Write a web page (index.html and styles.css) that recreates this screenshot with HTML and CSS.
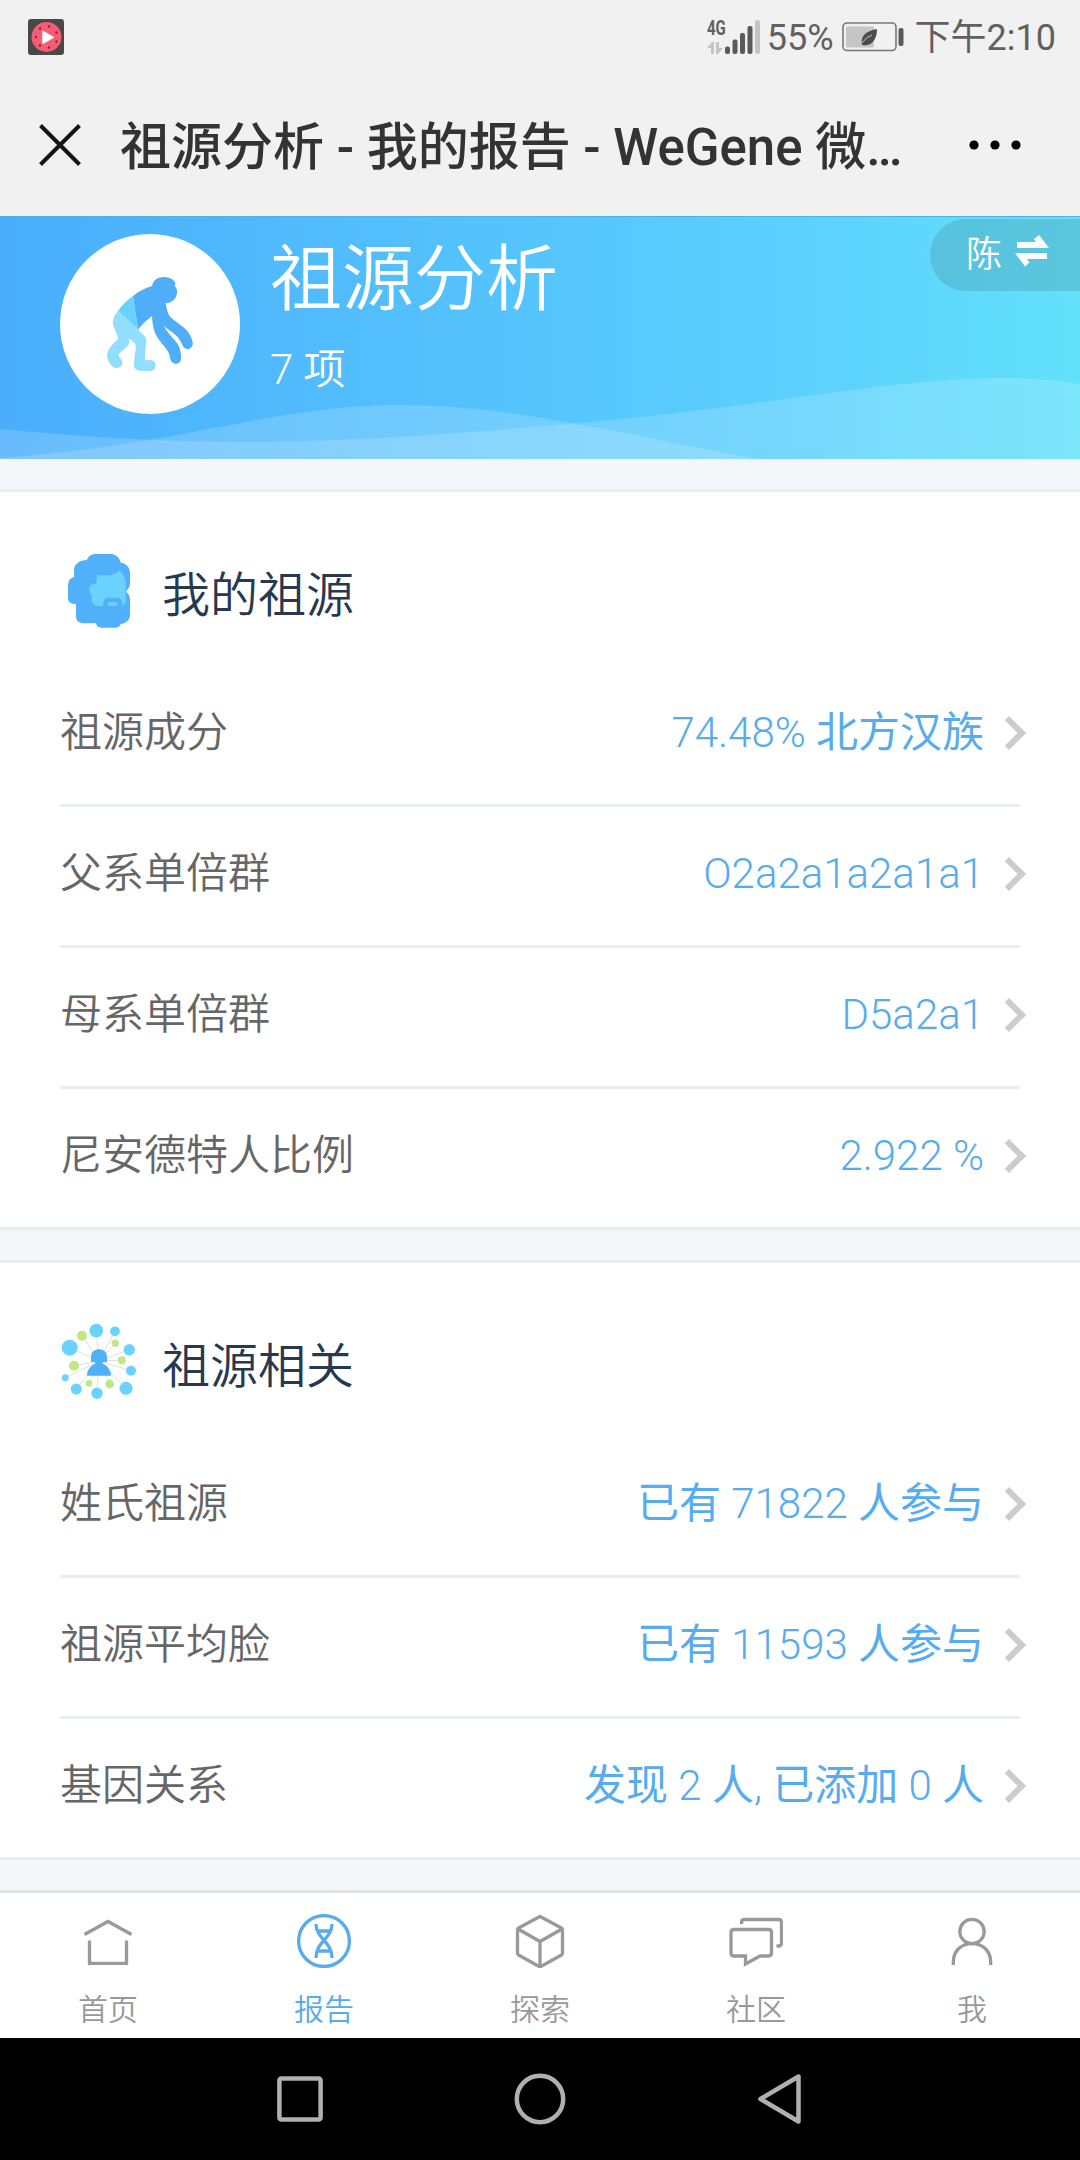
FILE: index.html
```html
<!DOCTYPE html>
<html lang="zh-CN">
<head>
    <meta charset="UTF-8">
    <meta name="viewport" content="width=device-width, initial-scale=1.0">
    <title>祖源分析 - 我的报告 - WeGene</title>
    <link rel="stylesheet" href="styles.css">
</head>
<body>
    <div class="statusbar">
        <svg class="app-icon" width="36" height="36" viewBox="0 0 36 36">
            <rect width="36" height="36" rx="3" fill="#484848"/>
            <circle cx="18.5" cy="18" r="15" fill="#f75c74"/>
            <g fill="#7c2f3b">
                <circle cx="21" cy="7.5" r="1.2"/><circle cx="12" cy="9.5" r="1.2"/>
                <circle cx="28.5" cy="13.5" r="1.2"/><circle cx="8" cy="18" r="1.2"/>
                <circle cx="28.5" cy="22.5" r="1.2"/><circle cx="12" cy="26.5" r="1.2"/>
                <circle cx="21" cy="28.5" r="1.2"/>
            </g>
            <path d="M15 12.5L25 18.3L15 24Z" fill="#fff" stroke="#fff" stroke-width="1.5" stroke-linejoin="round"/>
        </svg>
        <div class="status-right">
            <div class="network">
                <div class="network-type">
                    <span>4G</span>
                    <svg width="17" height="12" viewBox="0 0 17 12" fill="#c4c4c4">
                        <path d="M0 6L5 0H7V12H4V6Z"/>
                        <path d="M9 0H12V6H16L11 12H9Z"/>
                    </svg>
                </div>
                <svg width="36" height="34" viewBox="0 0 36 34" fill="#5a5a5a">
                    <rect x="0" y="26.500" width="5" height="7.500" rx="2"/>
                    <rect x="7.500" y="19.500" width="5" height="14.500" rx="2"/>
                    <rect x="15" y="13" width="5" height="21" rx="2"/>
                    <rect x="22.500" y="6" width="5" height="28" rx="2"/>
                    <rect x="30" y="0" width="5" height="34" rx="2" fill="#c4c4c4"/>
                </svg>
            </div>
            <span class="percent">55%</span>
            <svg class="battery" width="63" height="30" viewBox="0 0 63 30">
                <rect x="1" y="1" width="53" height="27.500" rx="4" fill="none" stroke="#777" stroke-width="1.600"/>
                <rect x="4" y="4.500" width="28" height="21" rx="1" fill="#c6c6c6"/>
                <path d="M20 23C18 13 25 9 35 7C35 18 29 25 20 23Z" fill="#4c4c4c"/>
                <path d="M20 21Q24 15 30 13" fill="none" stroke="#c6c6c6" stroke-width="1"/>
                <rect x="56.500" y="6" width="5" height="18" rx="2" fill="#5a5a5a"/>
            </svg>
            <span class="time">下午2:10</span>
        </div>
    </div>

    <header class="titlebar">
        <svg width="42" height="42" viewBox="0 0 42 42" stroke="#161616" stroke-width="4">
            <path d="M1.500 1.500L40.500 40.500M40.500 1.500L1.500 40.500"/>
        </svg>
        <h1>祖源分析 - 我的报告 - WeGene 微<span class="ellipsis">…</span></h1>
        <svg class="more" width="52" height="10" viewBox="0 0 52 10">
            <circle cx="5" cy="5" r="4.600"/><circle cx="26" cy="5" r="4.600"/><circle cx="47" cy="5" r="4.600"/>
        </svg>
    </header>

    <section class="hero">
        <svg class="waves" viewBox="0 0 1080 243" fill="#fff" fill-opacity="0.17">
            <path d="M0 213C200 232 330 230 600 205C760 190 900 162 1000 162C1040 162 1060 165 1080 168V243H0Z"/>
            <path d="M0 242C190 228 270 189 400 189C520 189 650 225 760 243H0Z"/>
        </svg>
        <div class="avatar">
            <svg width="180" height="180" viewBox="0 0 180 180">
                <path fill="#50aef9" d="M73 62C79 57 85 54 92 52C93 46 98 43 104 43C110 43 115 46 115.500 50L114.500 52C116.500 53.500 117.300 56 117 59C116.500 65 111 69.500 105.600 69C106.500 74 107.500 79 109.500 82C115 88 122 91 127.400 97C131 102 132.500 106 132.800 109.300C132.800 116 125 117 122.500 111.500C121 108 119 104 116.700 102C112 98 109 96 103.700 92C107 98 113 104 117 109C120 113 121.500 120 121 125C120 132 111.500 131 110.300 125C109.500 122 109.500 120 108 117.500C104 111 98 106 95 99C93 94 92.300 88 92 82C87 86 83 89 78 96Z"/>
                <path fill="#68d1ff" d="M73 62L78 96L58.200 76.700Q64 68 73 62Z"/>
                <path fill="#91deff" d="M58.200 76.700C53 83 52 87 53.500 92C55 97 57 100 58.300 104.500C54 109 49 113 47.500 118.500C46 124 49 129 52 132C57 137 64 132 62.300 127.500C61 124.500 58 122 58.800 120.500C62 116 66 114 68.500 111C69.700 109 69.200 107 69.300 104.300C71.500 107 75.500 108.500 75.800 111.500C76 118 74 124 73.900 131C74 134 76.500 136.500 79.600 136.700L90 137C97.500 137 97.500 126 90 126C88 126 86 127 84.800 125.500C84.500 119 86.500 112 86.300 106C86 102 82 99.500 78 96Z"/>
            </svg>
        </div>
        <div class="hero-text">
            <h2>祖源分析</h2>
            <p>7 项</p>
        </div>
        <div class="switch-user">
            <span>陈</span>
            <svg width="34" height="32" viewBox="0 0 34 32" fill="#fff">
                <path d="M2 7H21L19 4L24 0L34 13H2Z"/>
                <path d="M32 24H12L14.500 27.500L10 31.500L0 18H32Z"/>
            </svg>
        </div>
    </section>

    <main class="content">
        <section class="card">
            <div class="card-header">
                <svg width="78" height="78" viewBox="0 0 78 78">
                    <path fill="#50b0fa" d="M26.700 8C28.500 4 31 2 35 2H51C56 2 59.500 5.500 60.700 10.700C66 11 70 15.500 70 21V32C70 35.500 67.500 37.500 65.700 39.700C68.500 41.500 70 43.500 70 47V63C70 68 66 71.500 60.700 72C60 74.500 58 75.700 55 75.700H42C38 75.700 36.500 74 36 71.300H24C19 71.300 16 69 16 64V52C11 52 8 50 8 46V34C8 29 10 26 14 25.300V18C14 12 20 8 26.700 8Z"/>
                    <path fill="#69d2ff" d="M36.700 23.300H47C53 23.300 57 21.500 59.300 18C64 22 66.500 30 66 36L65 39.500Q65.700 41 65.700 45V49.700Q65.500 53 62.700 54Q62.500 45.700 56 45.700H49Q43.300 45.700 43.300 51V54H37Q31.700 53 31.700 47V43Q29.300 41 29.300 37Q29.300 33 33 32.300Q36.700 31.500 36.700 29Z"/>
                    <path fill="#69d2ff" d="M47.700 54V52.500Q47.700 50 50.200 50H55Q57.500 50 57.500 52.500V54Z"/>
                </svg>
                <h3>我的祖源</h3>
            </div>
            <ul class="list">
                <li><span class="label">祖源成分</span><span class="value">74.48% <b>北方汉族</b></span><i class="arrow"></i></li>
                <li><span class="label">父系单倍群</span><span class="value">O2a2a1a2a1a1</span><i class="arrow"></i></li>
                <li><span class="label">母系单倍群</span><span class="value">D5a2a1</span><i class="arrow"></i></li>
                <li><span class="label">尼安德特人比例</span><span class="value">2.922 %</span><i class="arrow"></i></li>
            </ul>
        </section>

        <section class="card">
            <div class="card-header">
                <svg width="78" height="78" viewBox="0 0 78 78">
                    <path stroke="#dcdcdc" stroke-width="0.900" fill="none" d="M39 38L9.700 24.700M39 38L36.300 7.700M39 38L55 8.300M39 38L69.300 26.700M39 38L71 47.700M39 38L66 65.300M39 38L37 70.300M39 38L16.300 66M39 38L5.300 54.700M39 38L22 12.700M39 38L55.300 20.300M39 38L61.700 37.300M39 38L49.700 61M39 38L29 60.300M39 38L14 42.700"/>
                    <g fill="#69d2ff">
                        <circle cx="9.700" cy="24.700" r="8"/><circle cx="36.300" cy="7.700" r="6.900"/>
                        <circle cx="55" cy="8.300" r="4.900"/><circle cx="69.300" cy="26.700" r="5.700"/>
                        <circle cx="71" cy="47.700" r="5"/><circle cx="66" cy="65.300" r="6.500"/>
                        <circle cx="37" cy="70.300" r="5.700"/><circle cx="16.300" cy="66" r="5.500"/>
                        <circle cx="5.300" cy="54.700" r="3.400"/>
                    </g>
                    <g fill="#bfe884">
                        <circle cx="22" cy="12.700" r="5"/><circle cx="55.300" cy="20.300" r="3.700"/>
                        <circle cx="61.700" cy="37.300" r="4"/><circle cx="49.700" cy="61" r="4.400"/>
                        <circle cx="29" cy="60.300" r="3.400"/><circle cx="14" cy="42.700" r="5"/>
                    </g>
                    <path fill="#50b0fa" d="M31 39V34C31 23.500 47 23.500 47 34V39H43.500L42.500 40.800C47 42 51 47 51 52.700H27C27 47 31 42 35.500 40.800L34.500 39Z"/>
                </svg>
                <h3>祖源相关</h3>
            </div>
            <ul class="list">
                <li><span class="label">姓氏祖源</span><span class="value"><b>已有</b> 71822 <b>人参与</b></span><i class="arrow"></i></li>
                <li><span class="label">祖源平均脸</span><span class="value"><b>已有</b> 11593 <b>人参与</b></span><i class="arrow"></i></li>
                <li><span class="label">基因关系</span><span class="value"><b>发现</b> 2 <b>人</b>, <b>已添加</b> 0 <b>人</b></span><i class="arrow"></i></li>
            </ul>
        </section>
    </main>

    <nav class="tabbar">
        <a class="tab">
            <svg viewBox="0 0 54 54">
                <path d="M3.500 20.500L27 7.500L50.500 20.500M8.500 26.500V49.300H45.500V26.500"/>
            </svg>
            <span>首页</span>
        </a>
        <a class="tab active">
            <svg viewBox="0 0 54 54">
                <circle cx="27" cy="27" r="25.400"/>
                <path d="M19 10C19 25 35 27 35 44M35 10C35 25 19 27 19 44M20 17H34M20 37H34"/>
            </svg>
            <span>报告</span>
        </a>
        <a class="tab">
            <svg viewBox="0 0 54 54">
                <path stroke-linejoin="round" d="M27 2.500L48.500 14Q49.500 14.500 49.500 16V39Q49.500 40.500 48.500 41L27 53L5.500 41Q4.500 40.500 4.500 39V16Q4.500 14.500 5.500 14ZM5 15L27 27.500L49 15M27 27.500V53"/>
            </svg>
            <span>探索</span>
        </a>
        <a class="tab">
            <svg viewBox="0 0 54 54">
                <path d="M5 15.500H39.500Q42.500 15.500 42.500 18.500V39Q42.500 42 39.500 42H31L16.500 50V42H5Q2 42 2 39V18.500Q2 15.500 5 15.500Z"/>
                <path d="M12.500 10V8.500Q12.500 5.500 15.500 5.500H49.500Q52.500 5.500 52.500 8.500V29Q52.500 32 49.500 32H47.500"/>
            </svg>
            <span>社区</span>
        </a>
        <a class="tab">
            <svg viewBox="0 0 54 54">
                <circle cx="27" cy="17.500" r="12.200"/>
                <path d="M8.300 51V48.500C8.300 37 16 29.700 27 29.700C38 29.700 45.700 37 45.700 48.500V51"/>
            </svg>
            <span>我</span>
        </a>
    </nav>

    <div class="navbar">
        <svg viewBox="0 0 54 54"><rect x="6.400" y="6.400" width="41.200" height="41.200" rx="2"/></svg>
        <svg viewBox="0 0 54 54"><circle cx="27" cy="27" r="23.200"/></svg>
        <svg viewBox="0 0 54 54"><path stroke-linejoin="round" d="M45.500 4.500V49.500L7.500 27Z"/></svg>
    </div>
</body>
</html>
```
FILE: styles.css
```css
* {
    margin: 0;
    padding: 0;
    box-sizing: border-box;
}

body {
    width: 1080px;
    height: 2160px;
    display: flex;
    flex-direction: column;
    font-family: Roboto, "Noto Sans CJK SC", sans-serif;
    background: #f3f7fa;
    overflow: hidden;
}

svg {
    display: block;
    flex-shrink: 0;
}

/* system status bar */
.statusbar {
    height: 74px;
    padding: 0 24px 0 28px;
    display: flex;
    align-items: center;
    justify-content: space-between;
    background: #f1f1f1;
    color: #606060;
    font-size: 36px;
    line-height: 42px;
}

.status-right {
    display: flex;
    align-items: center;
}

.network {
    display: flex;
    align-items: flex-end;
    margin-right: 6px;
}

.network-type {
    width: 18px;
    height: 34px;
    display: flex;
    flex-direction: column;
    justify-content: space-between;
}

.network-type span {
    font-size: 20px;
    line-height: 16px;
    font-weight: 700;
    transform: scaleX(0.75);
    transform-origin: left;
}

.percent,
.time {
    padding-top: 2px;
}

.battery {
    margin: 0 10px 0 8px;
}

/* title bar */
.titlebar {
    height: 142px;
    padding: 0 59px 0 39px;
    display: flex;
    align-items: center;
    background: #f1f1f1;
}

.titlebar h1 {
    flex: 1;
    margin-left: 39px;
    padding-top: 5px;
    font-size: 51px;
    line-height: 72px;
    font-weight: 500;
    color: #333;
    white-space: nowrap;
}

.titlebar .ellipsis {
    font-family: Roboto, sans-serif;
}

/* hero */
.hero {
    position: relative;
    height: 243px;
    padding: 17px 60px 0;
    display: flex;
    border-top: 1px solid #4fb2e0;
    background: linear-gradient(90deg, #4aaefc 0%, #5bd0fd 74%, #62e1fa 100%);
    color: #fff;
}

.waves {
    position: absolute;
    left: 0;
    bottom: 0;
    width: 1080px;
    height: 243px;
}

.avatar {
    position: relative;
    width: 180px;
    height: 180px;
    border-radius: 50%;
    background: #fff;
}

.hero-text {
    position: relative;
    margin-left: 30px;
    padding-top: 4px;
}

.hero-text h2 {
    font-size: 72px;
    line-height: 84px;
    font-weight: 350;
}

.hero-text p {
    margin-top: 18px;
    font-size: 42px;
    line-height: 60px;
    font-weight: 350;
}

.switch-user {
    position: absolute;
    top: 2px;
    right: 0;
    width: 150px;
    height: 72px;
    padding: 0 0 9px 36px;
    display: flex;
    align-items: center;
    gap: 13px;
    border-radius: 36px 0 0 36px;
    background: rgba(78, 151, 167, 0.35);
    font-size: 36px;
    font-weight: 350;
}

/* cards */
.content {
    flex: 1;
    padding-top: 30px;
}

.card {
    margin-bottom: 30px;
    border-top: 3px solid #e9edf0;
    background: #fff;
}

.card-header {
    height: 174px;
    padding: 60px 60px 36px;
    display: flex;
    align-items: center;
    gap: 24px;
}

.card-header h3 {
    padding-top: 10px;
    font-size: 48px;
    line-height: 68px;
    font-weight: 350;
    color: #28384f;
}

.list {
    padding: 0 60px;
    border-bottom: 3px solid #e9edf0;
    list-style: none;
}

.list li {
    height: 141px;
    padding-bottom: 5px;
    display: flex;
    align-items: center;
    border-bottom: 3px solid #e9edf0;
    font-size: 42px;
    line-height: 60px;
    font-weight: 300;
}

.list li:last-child {
    height: 138px;
    border-bottom: none;
}

.label {
    flex: 1;
    font-weight: 350;
    color: #666;
}

.value {
    color: #56acee;
}

.value b {
    font-weight: 400;
}

.arrow {
    width: 24px;
    height: 24px;
    margin: 0 -1px 0 13px;
    border-top: 6px solid #ccc;
    border-right: 6px solid #ccc;
    transform: rotate(45deg);
}

/* bottom tabs */
.tabbar {
    height: 148px;
    display: flex;
    border-top: 3px solid #dfe3e6;
    background: #fff;
}

.tab {
    flex: 1;
    padding-top: 21px;
    display: flex;
    flex-direction: column;
    align-items: center;
    gap: 21px;
    color: #999;
    font-size: 30px;
    line-height: 42px;
    font-weight: 350;
}

.tab svg {
    width: 54px;
    height: 54px;
    fill: none;
    stroke: currentColor;
    stroke-width: 3.3;
}

.tab.active {
    color: #56acee;
}

/* system navigation */
.navbar {
    height: 122px;
    display: flex;
    align-items: center;
    justify-content: center;
    gap: 186px;
    background: #000;
}

.navbar svg {
    width: 54px;
    height: 54px;
    fill: none;
    stroke: #b0b0b0;
    stroke-width: 4.5;
}
```
